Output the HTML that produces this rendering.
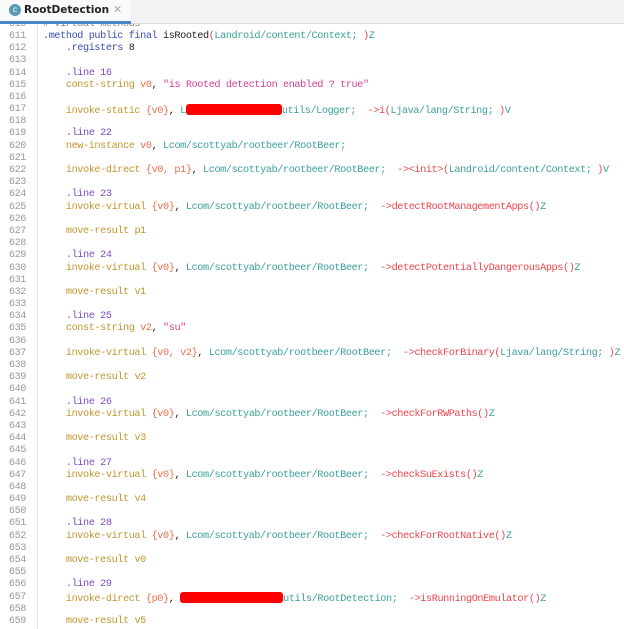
<!DOCTYPE html>
<html><head><style>
body{margin:0;width:624px;height:629px;overflow:hidden;background:#fff;font-family:"Liberation Mono",monospace;}
#code{position:absolute;left:0;top:18.8px;width:624px;font-size:10.2px;letter-spacing:-0.4px;line-height:12.19px;}
.r{height:12.19px;position:relative;white-space:pre}
.n{position:absolute;left:0;width:26px;text-align:right;color:#999}
.t{position:absolute;left:43px;color:#222}
.k{color:#c1962e}.d{color:#7a4cc2}.s{color:#cf3f93}.c{color:#3a9f9a}.m{color:#e8454c}.g{color:#e8704a}.p{color:#3b4fb0}
#gut{position:absolute;left:37px;top:23px;width:1px;height:606px;background:#e4e4e4}
#tab{position:absolute;left:0;top:0;width:624px;height:23px;background:#f2f2f2;border-bottom:1px solid #ddd;font-family:"DejaVu Sans",sans-serif;z-index:2}
.red{display:inline-block;background:#f00;border-radius:3px;height:11px;vertical-align:-2px}
</style></head><body>
<div id="tab">
<div style="position:absolute;left:0;top:0;width:131px;height:23px;background:#fafafa"></div>
<div style="position:absolute;left:0;top:21px;width:131px;height:3px;background:#4a88c7"></div>
<div style="position:absolute;left:9px;top:4px;width:12px;height:12px;border-radius:50%;background:#5a9ab5;color:#fff;font-size:8px;text-align:center;line-height:12px">c</div>
<div style="position:absolute;left:24px;top:4px;font-size:10.5px;font-weight:bold;color:#222">RootDetection</div>
<div style="position:absolute;left:113px;top:3px;font-size:11px;color:#aaa">✕</div>
</div>
<div id="gut"></div>
<div id="code"><div class="r"><span class="n">610</span><span class="t" style="color:#888"># virtual methods</span></div><div class="r"><span class="n">611</span><span class="t"><span class="p">.method public final</span> isRooted<span class="m">(</span><span class="c">Landroid/content/Context; </span><span class="m">)</span><span class="c">Z</span></span></div><div class="r"><span class="n">612</span><span class="t">    <span class="p">.registers</span> 8</span></div><div class="r"><span class="n">613</span></div><div class="r"><span class="n">614</span><span class="t">    <span class="d">.line</span> <span class="d">16</span></span></div><div class="r"><span class="n">615</span><span class="t">    <span class="k">const-string</span> <span class="g">v0</span>, <span class="s">"is Rooted detection enabled ? true"</span></span></div><div class="r"><span class="n">616</span></div><div class="r"><span class="n">617</span><span class="t">    <span class="k">invoke-static</span> <span class="g">{v0}</span>, <span class="c">L<span class="red" style="width:96px"></span>utils/Logger;</span>  <span class="m">-&gt;i(</span><span class="c">Ljava/lang/String; </span><span class="m">)</span><span class="c">V</span></span></div><div class="r"><span class="n">618</span></div><div class="r"><span class="n">619</span><span class="t">    <span class="d">.line</span> <span class="d">22</span></span></div><div class="r"><span class="n">620</span><span class="t">    <span class="k">new-instance</span> <span class="g">v0</span>, <span class="c">Lcom/scottyab/rootbeer/RootBeer;</span></span></div><div class="r"><span class="n">621</span></div><div class="r"><span class="n">622</span><span class="t">    <span class="k">invoke-direct</span> <span class="g">{v0, p1}</span>, <span class="c">Lcom/scottyab/rootbeer/RootBeer;</span>  <span class="m">-&gt;&lt;init&gt;(</span><span class="c">Landroid/content/Context; </span><span class="m">)</span><span class="c">V</span></span></div><div class="r"><span class="n">623</span></div><div class="r"><span class="n">624</span><span class="t">    <span class="d">.line</span> <span class="d">23</span></span></div><div class="r"><span class="n">625</span><span class="t">    <span class="k">invoke-virtual</span> <span class="g">{v0}</span>, <span class="c">Lcom/scottyab/rootbeer/RootBeer;</span>  <span class="m">-&gt;detectRootManagementApps()</span><span class="c">Z</span></span></div><div class="r"><span class="n">626</span></div><div class="r"><span class="n">627</span><span class="t">    <span class="k">move-result</span> <span class="k">p1</span></span></div><div class="r"><span class="n">628</span></div><div class="r"><span class="n">629</span><span class="t">    <span class="d">.line</span> <span class="d">24</span></span></div><div class="r"><span class="n">630</span><span class="t">    <span class="k">invoke-virtual</span> <span class="g">{v0}</span>, <span class="c">Lcom/scottyab/rootbeer/RootBeer;</span>  <span class="m">-&gt;detectPotentiallyDangerousApps()</span><span class="c">Z</span></span></div><div class="r"><span class="n">631</span></div><div class="r"><span class="n">632</span><span class="t">    <span class="k">move-result</span> <span class="k">v1</span></span></div><div class="r"><span class="n">633</span></div><div class="r"><span class="n">634</span><span class="t">    <span class="d">.line</span> <span class="d">25</span></span></div><div class="r"><span class="n">635</span><span class="t">    <span class="k">const-string</span> <span class="g">v2</span>, <span class="s">"su"</span></span></div><div class="r"><span class="n">636</span></div><div class="r"><span class="n">637</span><span class="t">    <span class="k">invoke-virtual</span> <span class="g">{v0, v2}</span>, <span class="c">Lcom/scottyab/rootbeer/RootBeer;</span>  <span class="m">-&gt;checkForBinary(</span><span class="c">Ljava/lang/String; </span><span class="m">)</span><span class="c">Z</span></span></div><div class="r"><span class="n">638</span></div><div class="r"><span class="n">639</span><span class="t">    <span class="k">move-result</span> <span class="k">v2</span></span></div><div class="r"><span class="n">640</span></div><div class="r"><span class="n">641</span><span class="t">    <span class="d">.line</span> <span class="d">26</span></span></div><div class="r"><span class="n">642</span><span class="t">    <span class="k">invoke-virtual</span> <span class="g">{v0}</span>, <span class="c">Lcom/scottyab/rootbeer/RootBeer;</span>  <span class="m">-&gt;checkForRWPaths()</span><span class="c">Z</span></span></div><div class="r"><span class="n">643</span></div><div class="r"><span class="n">644</span><span class="t">    <span class="k">move-result</span> <span class="k">v3</span></span></div><div class="r"><span class="n">645</span></div><div class="r"><span class="n">646</span><span class="t">    <span class="d">.line</span> <span class="d">27</span></span></div><div class="r"><span class="n">647</span><span class="t">    <span class="k">invoke-virtual</span> <span class="g">{v0}</span>, <span class="c">Lcom/scottyab/rootbeer/RootBeer;</span>  <span class="m">-&gt;checkSuExists()</span><span class="c">Z</span></span></div><div class="r"><span class="n">648</span></div><div class="r"><span class="n">649</span><span class="t">    <span class="k">move-result</span> <span class="k">v4</span></span></div><div class="r"><span class="n">650</span></div><div class="r"><span class="n">651</span><span class="t">    <span class="d">.line</span> <span class="d">28</span></span></div><div class="r"><span class="n">652</span><span class="t">    <span class="k">invoke-virtual</span> <span class="g">{v0}</span>, <span class="c">Lcom/scottyab/rootbeer/RootBeer;</span>  <span class="m">-&gt;checkForRootNative()</span><span class="c">Z</span></span></div><div class="r"><span class="n">653</span></div><div class="r"><span class="n">654</span><span class="t">    <span class="k">move-result</span> <span class="k">v0</span></span></div><div class="r"><span class="n">655</span></div><div class="r"><span class="n">656</span><span class="t">    <span class="d">.line</span> <span class="d">29</span></span></div><div class="r"><span class="n">657</span><span class="t">    <span class="k">invoke-direct</span> <span class="g">{p0}</span>, <span class="c"><span class="red" style="width:103px"></span>utils/RootDetection;</span>  <span class="m">-&gt;isRunningOnEmulator()</span><span class="c">Z</span></span></div><div class="r"><span class="n">658</span></div><div class="r"><span class="n">659</span><span class="t">    <span class="k">move-result</span> <span class="k">v5</span></span></div></div>
</body></html>
